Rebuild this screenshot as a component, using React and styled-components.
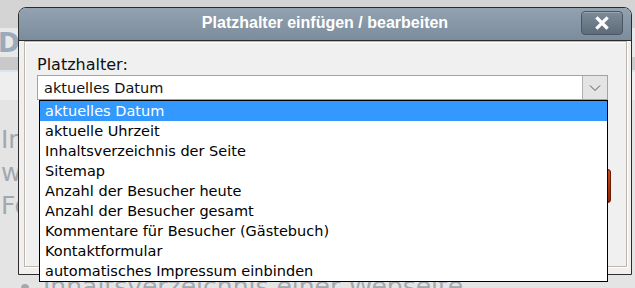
import React from "react";
import styled, { createGlobalStyle } from "styled-components";

const GlobalStyle = createGlobalStyle`
  html, body {
    margin: 0;
    padding: 0;
    overflow: hidden;
  }
  body {
    background: #e4e4e4;
    font-family: "DejaVu Sans", Verdana, sans-serif;
  }
`;

const Page = styled.div`
  position: relative;
  width: 635px;
  height: 288px;
  overflow: hidden;
  background: #e4e4e4;
`;

const TopBar = styled.div`
  height: 28px;
  background: #d4d4d4;
`;

const Header = styled.div`
  height: 29px;
  background: #e8e8e8;
  font-family: "DejaVu Sans", sans-serif;
  font-weight: bold;
  font-size: 26px;
  line-height: 30px;
  color: #9aaabb;
  margin-left: -2px;
`;

const NavBand = styled.div`
  height: 13px;
  background: #c9c9c9;
  border-bottom: 2px solid #d6e6ec;
`;

const SubArea = styled.div`
  height: 28px;
  background: #eeeeee;
`;

const Main = styled.div`
  padding-top: 23px;
  font-family: "DejaVu Sans", sans-serif;
  font-size: 25px;
  line-height: 33px;
  color: #a3a8ae;
`;

const Para = styled.p`
  margin: 0;
  padding-left: 1px;
  white-space: nowrap;
`;

const Bullets = styled.ul`
  margin: 48px 0 0;
  padding-left: 43px;
  white-space: nowrap;
`;

const Dialog = styled.div`
  position: absolute;
  left: 18px;
  top: 7px;
  width: 614px;
  height: 268px;
  box-sizing: border-box;
  border: 1px solid #2c2c2c;
  border-radius: 8px 8px 0 0;
  display: flex;
  flex-direction: column;
  background: #f0f0f0;
`;

const TitleBar = styled.div`
  height: 32px;
  flex: none;
  display: grid;
  grid-template-columns: 1fr auto 1fr;
  border-radius: 7px 7px 0 0;
  background: linear-gradient(#93a2b0, #7b8c9c);
  border-bottom: 1px solid #2c2c2c;
`;

const Title = styled.div`
  grid-column: 2;
  font-family: "Liberation Sans", Arial, sans-serif;
  font-weight: bold;
  font-size: 16px;
  line-height: 30px;
  color: #ffffff;
`;

const CloseButton = styled.button`
  grid-column: 3;
  justify-self: end;
  margin: 3px 8px 0 0;
  width: 42px;
  height: 24px;
  padding: 0;
  display: flex;
  align-items: center;
  justify-content: center;
  border: 1px solid #4b5662;
  border-radius: 4px;
  background: linear-gradient(#7d8b98, #5e6b78);
  box-shadow: inset 0 1px 0 rgba(255, 255, 255, 0.25);
`;

const Body = styled.div`
  flex: 1;
  padding: 0 4px 7px 5px;
  display: flex;
`;

const Panel = styled.div`
  flex: 1;
  box-sizing: border-box;
  border: 1px solid #bdb4ac;
  box-shadow: inset 1px 1px 0 #ffffff, 1px 1px 0 #ffffff;
  padding: 13px 15px 0 12px;
`;

const Label = styled.div`
  font-size: 16px;
  line-height: 19px;
  color: #111111;
  margin-bottom: 1px;
`;

const Field = styled.div`
  position: relative;
  margin-right: 3px;
`;

const SelectBox = styled.div`
  height: 25px;
  box-sizing: border-box;
  border: 1px solid #a3a3a3;
  background: #ffffff;
  display: flex;
  align-items: center;
  font-size: 14.5px;
  color: #111111;
`;

const SelectText = styled.span`
  flex: 1;
  padding-left: 6px;
`;

const Arrow = styled.span`
  width: 24px;
  align-self: stretch;
  display: flex;
  align-items: center;
  justify-content: center;
  background: #e4e4e4;
  border-left: 1px solid #b0b0b0;
`;

const List = styled.ul`
  position: absolute;
  top: 100%;
  left: 2px;
  right: 0;
  margin: 0;
  padding: 0;
  list-style: none;
  border: 1px solid #000000;
  background: #ffffff;
  z-index: 2;
`;

const Option = styled.li`
  height: 20px;
  line-height: 20px;
  padding-left: 5px;
  font-size: 14.5px;
  white-space: nowrap;
  color: ${p => (p.$active ? "#ffffff" : "#000000")};
  background: ${p => (p.$active ? "#3399ff" : "transparent")};
`;

const ButtonRow = styled.div`
  margin-top: 69px;
  display: flex;
  justify-content: flex-end;
`;

const RedButton = styled.div`
  width: 96px;
  height: 34px;
  box-sizing: border-box;
  border: 1px solid #6a1c08;
  border-radius: 3px;
  background: linear-gradient(#c84a1c, #8e2604);
`;

const options = [
  "aktuelles Datum",
  "aktuelle Uhrzeit",
  "Inhaltsverzeichnis der Seite",
  "Sitemap",
  "Anzahl der Besucher heute",
  "Anzahl der Besucher gesamt",
  "Kommentare für Besucher (Gästebuch)",
  "Kontaktformular",
  "automatisches Impressum einbinden",
];

export default function App() {
  return (
    <>
      <GlobalStyle />
      <Page>
        <TopBar />
        <Header>Dokumente</Header>
        <NavBand />
        <SubArea />
        <Main>
          <Para>Inhalte einfügen</Para>
          <Para>werden automatisch</Para>
          <Para>Formulare</Para>
          <Bullets>
            <li>Inhaltsverzeichnis einer Webseite</li>
          </Bullets>
        </Main>

        <Dialog>
          <TitleBar>
            <Title>Platzhalter einfügen / bearbeiten</Title>
            <CloseButton aria-label="Schließen">
              <svg width="16" height="14" viewBox="0 0 16 14">
                <path d="M3.5 2.5 L12.5 11.5 M12.5 2.5 L3.5 11.5" stroke="#ffffff" strokeWidth="3.2" strokeLinecap="square" />
              </svg>
            </CloseButton>
          </TitleBar>
          <Body>
            <Panel>
              <Label>Platzhalter:</Label>
              <Field>
                <SelectBox>
                  <SelectText>aktuelles Datum</SelectText>
                  <Arrow>
                    <svg width="12" height="8" viewBox="0 0 12 8">
                      <polyline points="1,1.5 6,6.5 11,1.5" fill="none" stroke="#555555" strokeWidth="1" />
                    </svg>
                  </Arrow>
                </SelectBox>
                <List>
                  {options.map((o, i) => (
                    <Option key={o} $active={i === 0}>{o}</Option>
                  ))}
                </List>
              </Field>
              <ButtonRow>
                <RedButton />
              </ButtonRow>
            </Panel>
          </Body>
        </Dialog>
      </Page>
    </>
  );
}
